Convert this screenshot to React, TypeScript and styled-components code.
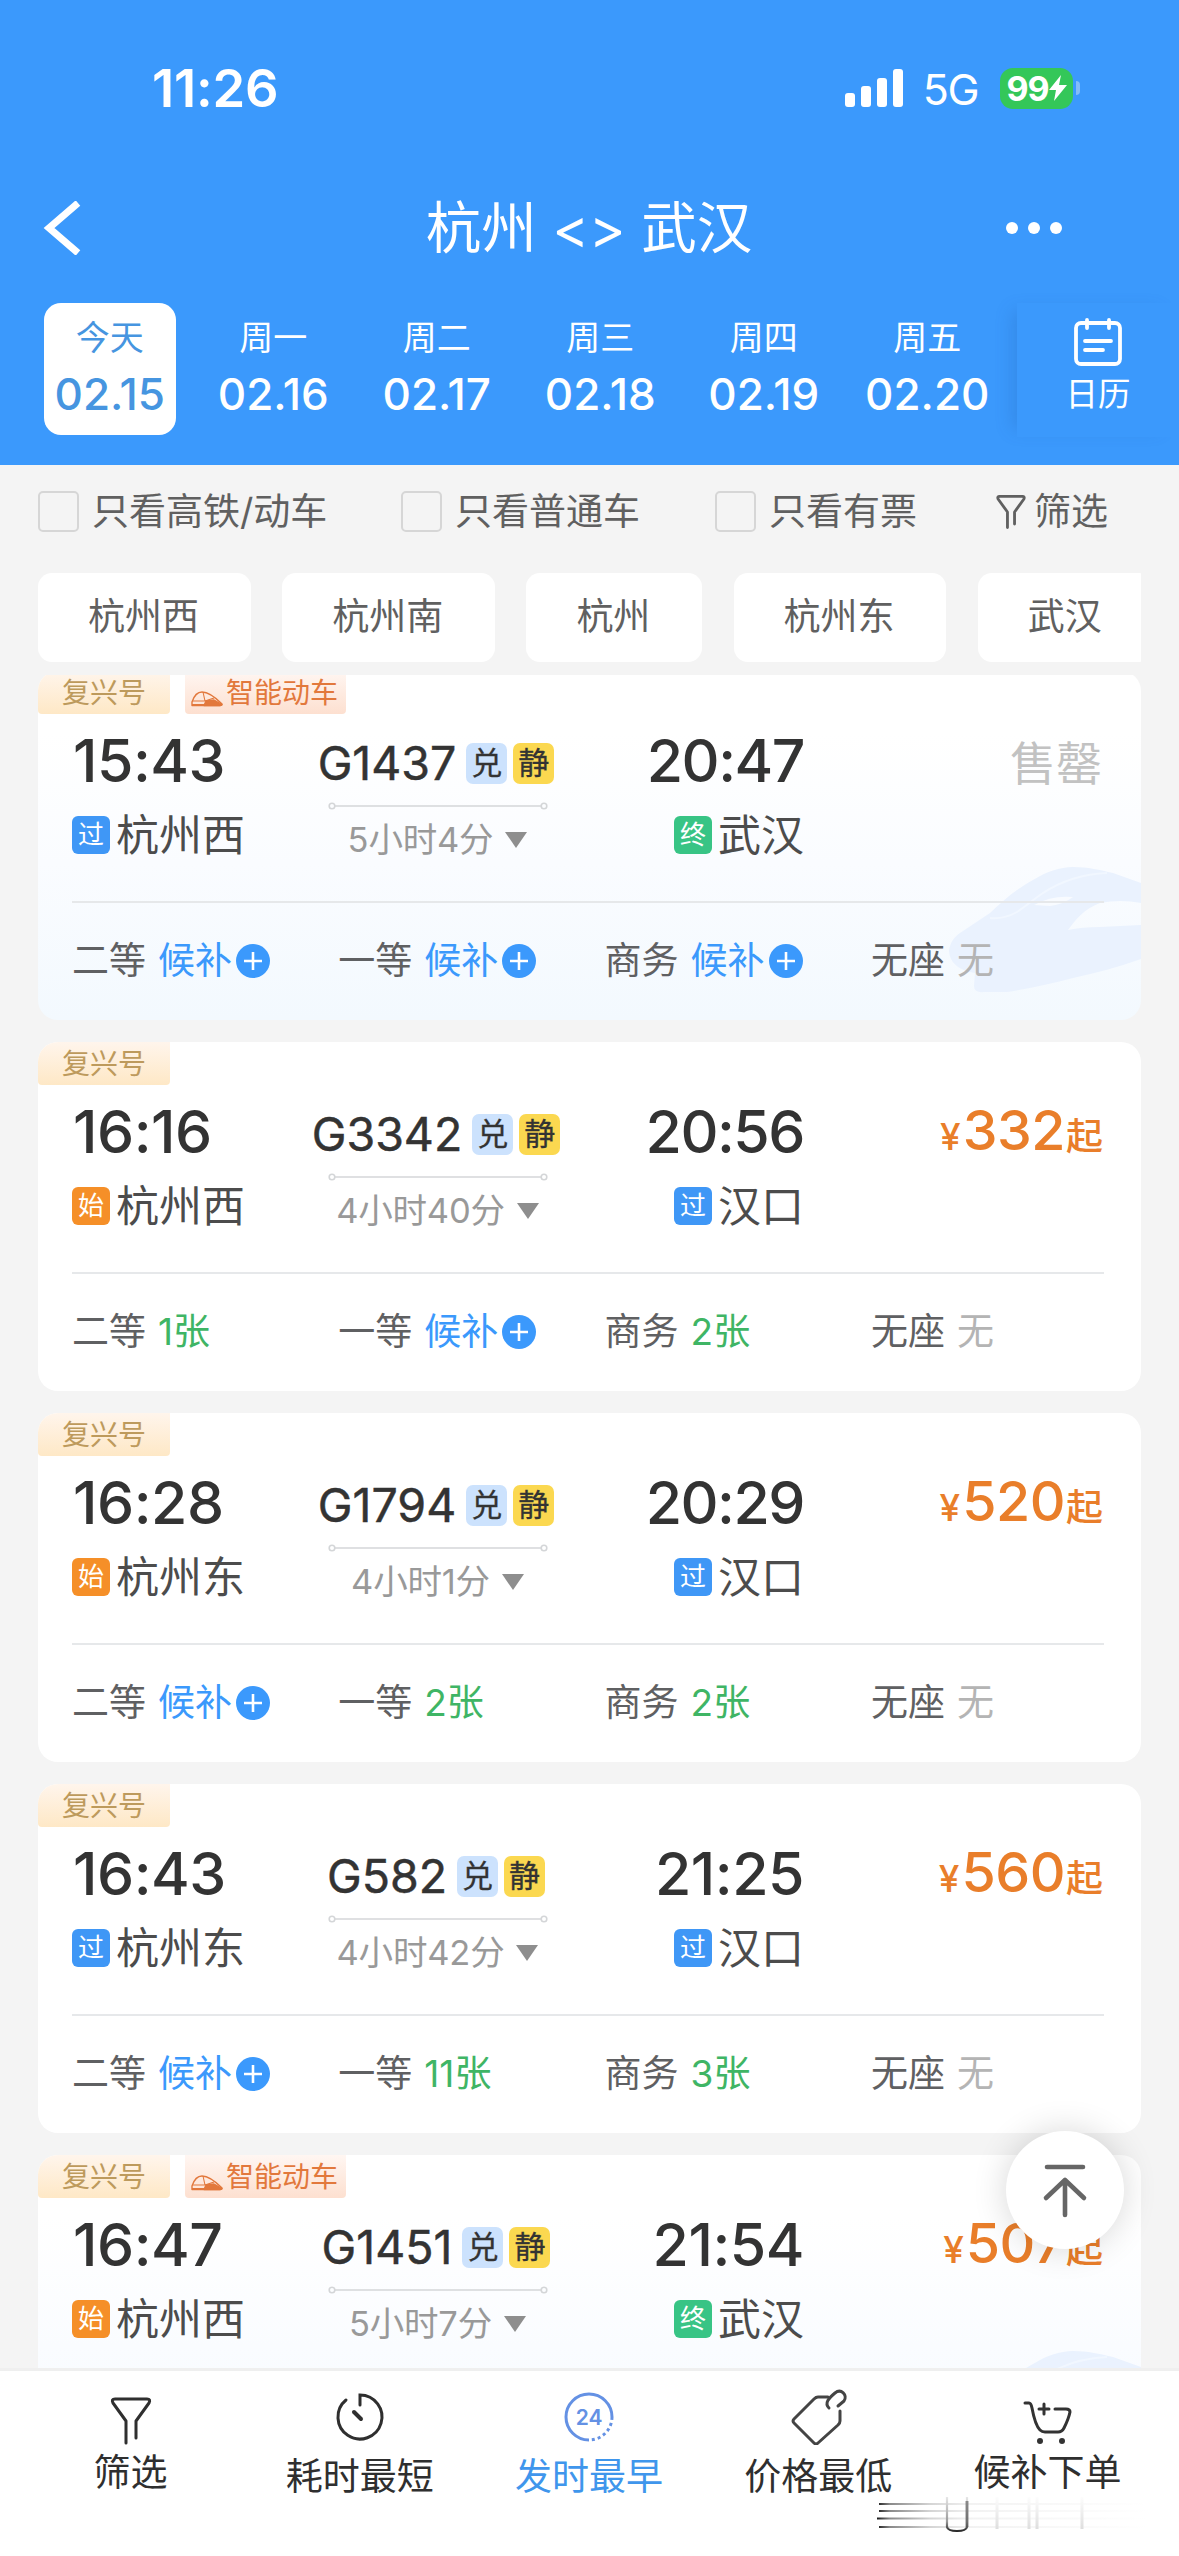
import React from "react";
import styled, { createGlobalStyle } from "styled-components";

const Global = createGlobalStyle`
  * { box-sizing: border-box; }
  body {
    margin: 0;
    background: #f4f4f4;
    font-family: Inter, "Noto Sans CJK SC", sans-serif;
  }
  svg { display: block; flex: none; }
`;

const Page = styled.div`
  width: 1179px;
  height: 2556px;
  display: flex;
  flex-direction: column;
  overflow: hidden;
  background: #f4f4f4;
`;

const Header = styled.header`
  height: 465px;
  flex: none;
  background: #3b99fc;
  color: #fff;
  display: flex;
  flex-direction: column;
`;

const StatusBar = styled.div`
  height: 176px;
  flex: none;
  padding: 0 99px 0 152px;
  display: flex;
  align-items: center;
`;

const Clock = styled.div`
  font-size: 52.5px;
  font-weight: 600;
  letter-spacing: -0.2px;
  line-height: 60px;
  flex: 1;
`;

const Network = styled.div`
  font-size: 43px;
  line-height: 60px;
  letter-spacing: -1.5px;
  margin: 2px 22px 0 19px;
`;

const Battery = styled.div`
  width: 73px;
  height: 41px;
  border-radius: 13px;
  background: #34c759;
  font-size: 34px;
  font-weight: 700;
  letter-spacing: -1px;
  display: flex;
  align-items: center;
  justify-content: center;
`;

const BatteryTip = styled.div`
  width: 4px;
  height: 14px;
  margin-left: 3px;
  border-radius: 0 4px 4px 0;
  background: #84bdf8;
`;

const TitleBar = styled.div`
  height: 104px;
  flex: none;
  display: flex;
  align-items: center;
  justify-content: space-between;
  padding: 0 117px 0 43px;
`;

const Title = styled.h1`
  margin: 0 0 0 91px;
  font-size: 55.5px;
  line-height: 70px;
  font-weight: 400;
`;

const DateRow = styled.div`
  height: 185px;
  display: flex;
  padding: 23px 0 0 28px;
`;

const DateList = styled.div`
  display: flex;
  width: 989px;
`;

const DateTab = styled.div<{ $active?: boolean }>`
  width: 132px;
  height: 132px;
  margin: 0 15.75px;
  flex: none;
  border-radius: 17px;
  background: ${(p) => (p.$active ? "#fff" : "transparent")};
  color: ${(p) => (p.$active ? "#4695e0" : "#fff")};
  display: flex;
  flex-direction: column;
  align-items: center;
  padding-top: 12px;
`;

const Weekday = styled.div`
  font-size: 34px;
  line-height: 46px;
`;

const DayNumber = styled.div`
  font-size: 44px;
  font-weight: 500;
  line-height: 52px;
  margin-top: 7px;
`;

const CalendarPane = styled.div`
  width: 162px;
  height: 134px;
  padding: 15px 0 0 0;
  background: #3b99fc;
  box-shadow: -12px 0 16px -8px rgba(30, 90, 170, 0.25);
  display: flex;
  flex-direction: column;
  align-items: center;
  font-size: 32.5px;
  line-height: 46px;
  gap: 6px;
`;

const FilterRow = styled.div`
  height: 93px;
  flex: none;
  padding: 0 0 0 38px;
  display: flex;
  align-items: center;
  color: #606060;
  font-size: 37px;
  line-height: 50px;
`;

const CheckItem = styled.label<{ $width: number }>`
  width: ${(p) => p.$width}px;
  display: flex;
  align-items: center;
  gap: 13px;
  white-space: nowrap;
`;

const Box = styled.span`
  width: 41px;
  height: 41px;
  border: 2.5px solid #d6d6d6;
  border-radius: 5px;
  flex: none;
`;

const FilterButton = styled.div`
  display: flex;
  align-items: center;
  gap: 8px;
`;

const ChipRow = styled.div`
  height: 89px;
  flex: none;
  margin: 15px 38px 13px;
  display: flex;
  gap: 31.7px;
  overflow: hidden;
`;

const Chip = styled.div`
  padding: 0 51.5px 0 50px;
  height: 89px;
  flex: none;
  background: #fff;
  color: #606060;
  border-radius: 14px;
  font-size: 37px;
  line-height: 87px;
`;

const List = styled.main`
  flex: 1;
  min-height: 0;
  overflow: hidden;
  padding: 0 38px;
`;

const Cards = styled.div`
  margin-top: -4px;
  display: flex;
  flex-direction: column;
  gap: 22px;
`;

const Card = styled.article<{ $smart?: boolean }>`
  height: 349px;
  flex: none;
  border-radius: 20px;
  overflow: hidden;
  background: ${(p) =>
    p.$smart ? "linear-gradient(#fff 18%, #fafcff 55%, #f3f9fe 100%)" : "#fff"};
  position: relative;
  display: flex;
  flex-direction: column;
`;

const TrainArt = styled.svg`
  position: absolute;
  right: 0;
  bottom: 27px;
`;

const Tags = styled.div`
  height: 43px;
  display: flex;
  gap: 15px;
`;

const Tag = styled.div<{ $smart?: boolean }>`
  width: ${(p) => (p.$smart ? 161 : 132)}px;
  height: 43px;
  padding: 2px 0 0 ${(p) => (p.$smart ? 6 : 24)}px;
  border-radius: 0 0 4px 4px;
  display: flex;
  align-items: center;
  gap: 3px;
  font-size: 28px;
  line-height: 41px;
  white-space: nowrap;
  color: ${(p) => (p.$smart ? "#e2783c" : "#bd9a5c")};
  background: ${(p) =>
    p.$smart
      ? "linear-gradient(#fff6f2, #fde0d0)"
      : "linear-gradient(#fff5ec, #fee8c6)"};
`;

const TrainIcon = styled.svg`
  margin-top: 10px;
`;

const Trip = styled.div`
  height: 189px;
  margin: 0 37px 0 34px;
  border-bottom: 2px solid #e6e8ea;
  display: grid;
  grid-template-columns: 220px 289px 223px 1fr;
  position: relative;
`;

const Stop = styled.div<{ $end?: boolean }>`
  display: flex;
  flex-direction: column;
  align-items: ${(p) => (p.$end ? "flex-end" : "flex-start")};
`;

const Time = styled.div<{ $tight?: boolean }>`
  margin-top: 11.5px;
  padding-left: 1px;
  font-size: 59px;
  font-weight: 500;
  line-height: 70px;
  letter-spacing: ${(p) => (p.$tight ? -1.5 : -0.5)}px;
  color: #333;
`;

const Station = styled.div`
  margin-top: 9.5px;
  display: flex;
  align-items: center;
  gap: 6px;
  font-size: 43px;
  line-height: 60px;
  color: #4c4c4c;
  white-space: nowrap;
`;

const kinds: Record<string, string> = { 过: "#3f97f6", 始: "#f58f28", 终: "#38c485" };

const StopKind = styled.span<{ $color: string }>`
  width: 38px;
  height: 38px;
  border-radius: 6px;
  background: ${(p) => p.$color};
  color: #fff;
  font-size: 26px;
  line-height: 38px;
  text-align: center;
`;

const Middle = styled.div`
  display: flex;
  flex-direction: column;
  align-items: center;
`;

const TrainNo = styled.div`
  margin-top: 19px;
  padding-right: 1px;
  height: 60px;
  display: flex;
  align-items: center;
  font-size: 46.5px;
  color: #333;
  -webkit-text-stroke: 0.5px #333;
  white-space: nowrap;
`;

const Feature = styled.span<{ $quiet?: boolean }>`
  width: 41px;
  height: 41px;
  margin-left: ${(p) => (p.$quiet ? 6 : 10)}px;
  border-radius: 7px;
  background: ${(p) => (p.$quiet ? "#fbd850" : "#cce2fd")};
  font-size: 31px;
  line-height: 40px;
  text-align: center;
  -webkit-text-stroke: 0.3px #333;
`;

const Route = styled.svg`
  margin: 9px 0 0 2px;
`;

const Duration = styled.div`
  margin-top: 5px;
  padding-left: 2px;
  display: flex;
  align-items: center;
  gap: 12px;
  font-size: 34.5px;
  line-height: 50px;
  letter-spacing: -0.2px;
  color: #999;
`;

const Fare = styled.div`
  display: flex;
  align-items: baseline;
  justify-content: flex-end;
  height: 90px;
  margin-top: 10px;
  padding-right: 1px;
  line-height: 70px;
  color: #e97e2a;
  font-size: 37px;
  font-weight: 500;
  white-space: nowrap;
`;

const Amount = styled.span`
  font-size: 55.5px;
  letter-spacing: -0.5px;
  margin: 0 1px 0 2px;
`;

const SoldOut = styled.div`
  margin-top: 14px;
  padding-right: 2px;
  font-size: 46px;
  line-height: 70px;
  text-align: right;
  color: #c2c2c2;
`;

const Seats = styled.div`
  padding: 33px 0 0 34px;
  display: grid;
  grid-template-columns: repeat(4, 266.3px);
  position: relative;
  font-size: 37px;
  line-height: 50px;
  color: #5f6062;
`;

const Seat = styled.div`
  display: flex;
  align-items: center;
  white-space: nowrap;
`;

const SeatValue = styled.span<{ $color: string }>`
  margin-left: 12px;
  color: ${(p) => p.$color};
  display: flex;
  align-items: center;
  gap: 4px;
`;

const TabBar = styled.nav`
  height: 188px;
  flex: none;
  border-top: 3px solid #efefef;
  background: #fff;
  padding: 0 17px 0 16px;
  display: flex;
  position: relative;
`;

const Tab = styled.div<{ $active?: boolean; $raised?: boolean }>`
  flex: 1;
  display: flex;
  flex-direction: column;
  align-items: center;
  padding-top: 16px;
  font-size: 37px;
  line-height: 52px;
  color: ${(p) => (p.$active ? "#3f96ec" : "#2f2f2f")};
  gap: ${(p) => (p.$raised ? 2 : 6)}px;
`;

const TabFunnel = styled.div`
  padding-top: 10px;
`;

const Smear = styled.svg`
  position: absolute;
  left: 876px;
  top: 124px;
`;

const BackToTop = styled.button`
  position: absolute;
  left: 1006px;
  top: 2131px;
  width: 118px;
  height: 118px;
  border: 0;
  border-radius: 50%;
  background: #fff;
  box-shadow: 0 0 34px rgba(0, 0, 0, 0.16);
  display: flex;
  align-items: center;
  justify-content: center;
  padding: 0;
`;

type Train = {
  no: string;
  smart?: boolean;
  dep: string;
  arr: string;
  from: [string, string];
  to: [string, string];
  time: string;
  price?: string;
  seats?: string[];
};

const trains: Train[] = [
  { no: "G1437", smart: true, dep: "15:43", arr: "20:47", from: ["过", "杭州西"], to: ["终", "武汉"], time: "5小时4分", seats: ["候补", "候补", "候补", "无"] },
  { no: "G3342", dep: "16:16", arr: "20:56", from: ["始", "杭州西"], to: ["过", "汉口"], time: "4小时40分", price: "332", seats: ["1张", "候补", "2张", "无"] },
  { no: "G1794", dep: "16:28", arr: "20:29", from: ["始", "杭州东"], to: ["过", "汉口"], time: "4小时1分", price: "520", seats: ["候补", "2张", "2张", "无"] },
  { no: "G582", dep: "16:43", arr: "21:25", from: ["过", "杭州东"], to: ["过", "汉口"], time: "4小时42分", price: "560", seats: ["候补", "11张", "3张", "无"] },
  { no: "G1451", smart: true, dep: "16:47", arr: "21:54", from: ["始", "杭州西"], to: ["终", "武汉"], time: "5小时7分", price: "507" },
];

const seatNames = ["二等", "一等", "商务", "无座"];
const seatColor = (v: string) => (v === "候补" ? "#3b99fc" : v === "无" ? "#b4b4b4" : "#3fb565");

const Funnel = ({ w, h, s }: { w: number; h: number; s: number }) => (
  <svg width={w} height={h} viewBox="0 0 42 48" fill="none" stroke="currentColor" strokeWidth={s} strokeLinecap="round" strokeLinejoin="round">
    <path d="M16 46V24L3 6Q1 2 5 2H37Q41 2 39 6L26 24V41" />
  </svg>
);

const BulletTrain = () => (
  <TrainIcon width="32" height="16" viewBox="0 0 32 16" fill="none" stroke="#e2783c" strokeWidth="1.4" strokeLinejoin="round">
    <path d="M1 14.5V11C3 5 6 1 11 1C18 1 24 6 31 13Q31 14.5 29 14.5Z" />
    <path d="M2 10H14L12 1M14 10L23 7" strokeWidth="1.1" />
    <path d="M13 14.5L15 10L23 9L31 13.5L29 14.5Z" fill="#e2783c" />
    <path d="M1 14H16" strokeWidth="2" />
  </TrainIcon>
);

const Plus = () => (
  <svg width="34" height="34" viewBox="0 0 34 34">
    <circle cx="17" cy="17" r="17" fill="#3b99fc" />
    <path d="M8 17H26M17 8V26" stroke="#fff" strokeWidth="2.6" />
  </svg>
);

function TrainCard({ t }: { t: Train }) {
  return (
    <Card $smart={t.smart}>
      {t.smart && (
        <TrainArt width="193" height="126" viewBox="0 0 193 126">
          <path d="M1 84C2 76 6 70 12 66L42 46C55 34 68 22 85 13C98 5 112 0 125 0C140 0 152 3 165 6L193 16V36Q172 32 152 36C136 42 128 52 120 63Q134 60 152 60L193 58V92C170 100 148 106 125 111C102 117 80 122 59 125H36Q26 126 26 119L27 106C14 104 2 98 1 84Z" fill="#eaf2fe" />
          <path d="M42 51C54 52 62 49 69 45C78 39 86 32 95 26C112 15 134 7 159 6" fill="none" stroke="#f1f7ff" strokeWidth="2" />
          <path d="M86 38Q104 28 125 30Q116 37 102 39Z" fill="#f8fbff" />
        </TrainArt>
      )}
      <Tags>
        <Tag>复兴号</Tag>
        {t.smart && <Tag $smart><BulletTrain />智能动车</Tag>}
      </Tags>
      <Trip>
        <Stop>
          <Time>{t.dep}</Time>
          <Station><StopKind $color={kinds[t.from[0]]}>{t.from[0]}</StopKind>{t.from[1]}</Station>
        </Stop>
        <Middle>
          <TrainNo>{t.no}<Feature>兑</Feature><Feature $quiet>静</Feature></TrainNo>
          <Route width="220" height="8" viewBox="0 0 220 8" fill="none" stroke="#d4d6d8" strokeWidth="1.6">
            <path d="M7 4H213" /><circle cx="4" cy="4" r="2.8" /><circle cx="216" cy="4" r="2.8" />
          </Route>
          <Duration>{t.time}<svg width="22" height="16" viewBox="0 0 22 16"><path d="M0 0H22L11 16Z" fill="#8e8e8e" /></svg></Duration>
        </Middle>
        <Stop $end>
          <Time $tight={t.arr.startsWith("20")}>{t.arr}</Time>
          <Station><StopKind $color={kinds[t.to[0]]}>{t.to[0]}</StopKind>{t.to[1]}</Station>
        </Stop>
        {t.price ? <Fare>¥<Amount>{t.price}</Amount>起</Fare> : <SoldOut>售罄</SoldOut>}
      </Trip>
      {t.seats && (
        <Seats>
          {t.seats.map((v, i) => (
            <Seat key={i}>{seatNames[i]}<SeatValue $color={seatColor(v)}>{v}{v === "候补" && <Plus />}</SeatValue></Seat>
          ))}
        </Seats>
      )}
    </Card>
  );
}

const days = [["今天", "02.15"], ["周一", "02.16"], ["周二", "02.17"], ["周三", "02.18"], ["周四", "02.19"], ["周五", "02.20"]];

export default function App() {
  return (
    <>
      <Global />
      <Page>
        <Header>
          <StatusBar>
            <Clock>11:26</Clock>
            <svg width="59" height="38" viewBox="0 0 59 38" fill="#fff">
              <rect x="0" y="24" width="10" height="14" rx="3" />
              <rect x="16" y="17" width="10" height="21" rx="3" />
              <rect x="32" y="9" width="10" height="29" rx="3" />
              <rect x="48" y="0" width="10" height="38" rx="3" />
            </svg>
            <Network>5G</Network>
            <Battery>99<svg width="18" height="26" viewBox="0 0 18 26"><path d="M12 0L0 15H7L5 26L18 10H10Z" fill="#fff" /></svg></Battery>
            <BatteryTip />
          </StatusBar>
          <TitleBar>
            <svg width="38" height="54" viewBox="0 0 38 54" fill="none" stroke="#fff" strokeWidth="7"><path d="M35 2L6 27L35 52" /></svg>
            <Title>杭州 &lt;&gt; 武汉</Title>
            <svg width="56" height="14" viewBox="0 0 56 14" fill="#fff"><circle cx="6" cy="7" r="6" /><circle cx="28" cy="7" r="6" /><circle cx="50" cy="7" r="6" /></svg>
          </TitleBar>
          <DateRow>
            <DateList>
              {days.map(([w, d], i) => (
                <DateTab key={d} $active={i === 0}><Weekday>{w}</Weekday><DayNumber>{d}</DayNumber></DateTab>
              ))}
            </DateList>
            <CalendarPane>
              <svg width="50" height="48" viewBox="0 0 50 48" fill="none" stroke="#fff" strokeWidth="3.8" strokeLinecap="round">
                <rect x="3" y="5" width="44" height="41" rx="5" />
                <path d="M14 2V10M36 2V10M12 23H38M12 32H30" />
              </svg>
              日历
            </CalendarPane>
          </DateRow>
        </Header>
        <FilterRow>
          <CheckItem $width={363}><Box />只看高铁/动车</CheckItem>
          <CheckItem $width={314}><Box />只看普通车</CheckItem>
          <CheckItem $width={281}><Box />只看有票</CheckItem>
          <FilterButton><Funnel w={30} h={34} s={4} />筛选</FilterButton>
        </FilterRow>
        <ChipRow>
          {["杭州西", "杭州南", "杭州", "杭州东", "武汉"].map((c) => <Chip key={c}>{c}</Chip>)}
        </ChipRow>
        <List>
          <Cards>{trains.map((t) => <TrainCard key={t.no} t={t} />)}</Cards>
        </List>
        <TabBar>
          <Tab $raised>
            <TabFunnel><Funnel w={42} h={48} s={3} /></TabFunnel>
            筛选
          </Tab>
          <Tab>
            <svg width="54" height="58" viewBox="0 0 54 58" fill="none" stroke="#2f2f2f" strokeWidth="3" strokeLinecap="round">
              <path d="M27 18V8A22 22 0 1 1 13 13" /><path d="M21 25L28 32" strokeWidth="4" />
            </svg>
            耗时最短
          </Tab>
          <Tab $active>
            <svg width="54" height="58" viewBox="0 0 54 58" fill="none" stroke="#6491e4" strokeWidth="3">
              <path d="M27 53A23 23 0 1 1 50 30" /><path d="M50 30A23 23 0 0 1 27 53" strokeDasharray="3 3" />
              <text x="27" y="38" textAnchor="middle" fontSize="21" fontWeight="600" fill="#6491e4" stroke="none">24</text>
            </svg>
            发时最早
          </Tab>
          <Tab>
            <svg width="58" height="58" viewBox="0 0 58 58" fill="none" stroke="#444" strokeWidth="3" strokeLinecap="round" strokeLinejoin="round">
              <path d="M39 10H29Q27 10 25 12L5 32Q3 34 5 36L25 56Q27 58 29 56L49 38Q51 36 51 34V24" />
              <path d="M40 21C35 16 40 11 46 6C52 1 59 8 55 14L49 19" />
            </svg>
            价格最低
          </Tab>
          <Tab $raised>
            <svg width="54" height="58" viewBox="0 0 54 58" fill="none" stroke="#333" strokeWidth="3" strokeLinecap="round" strokeLinejoin="round">
              <path d="M5 16H9Q11 16 12 21C14 32 17 40 20 43Q22 45 25 45H38Q42 45 44 41C47 35 49 30 50 25Q50 22 46 22H35" /><path d="M24 17V27M19 22H29" />
              <circle cx="20" cy="54" r="3" fill="#333" stroke="none" /><circle cx="42" cy="54" r="3" fill="#333" stroke="none" />
            </svg>
            候补下单
          </Tab>
          <Smear width="280" height="46" viewBox="0 0 280 46" fill="none">
            <defs>
              <linearGradient id="fadeX" gradientUnits="userSpaceOnUse" x1="0" y1="0" x2="270" y2="0">
                <stop stopColor="#111" /><stop offset="0.05" stopColor="#888" /><stop offset="0.2" stopColor="#d4d4d4" /><stop offset="0.35" stopColor="#f2f2f2" /><stop offset="1" stopColor="#fff" />
              </linearGradient>
              <linearGradient id="fadeY" gradientUnits="userSpaceOnUse" x1="0" y1="0" x2="0" y2="38"><stop stopColor="#eee" /><stop offset="0.7" stopColor="#999" /><stop offset="1" stopColor="#111" /></linearGradient>
              <linearGradient id="fadeThin" gradientUnits="userSpaceOnUse" x1="0" y1="0" x2="0" y2="36"><stop stopColor="#fff" /><stop offset="1" stopColor="#dcdcdc" /></linearGradient>
            </defs>
            <path d="M3 9H270M3 16H270M1 23.5H270M3 32H270" stroke="url(#fadeX)" strokeWidth="2" />
            <path d="M71 2V32Q72 36 81 36Q90 36 91 32V2" stroke="url(#fadeY)" strokeWidth="2.2" />
            <path d="M91 6V32" stroke="#555" strokeOpacity="0.6" strokeWidth="3" />
            <path d="M121 2V34M153 2V34M161 2V34M206 2V34" stroke="url(#fadeThin)" strokeWidth="3" />
          </Smear>
        </TabBar>
      </Page>
      <BackToTop>
        <svg width="46" height="58" viewBox="0 0 46 58" fill="none" stroke="#666" strokeWidth="4.6" strokeLinecap="round" strokeLinejoin="round">
          <path d="M5 6H41M23 54V19M4 37L23 19L42 37" />
        </svg>
      </BackToTop>
    </>
  );
}
